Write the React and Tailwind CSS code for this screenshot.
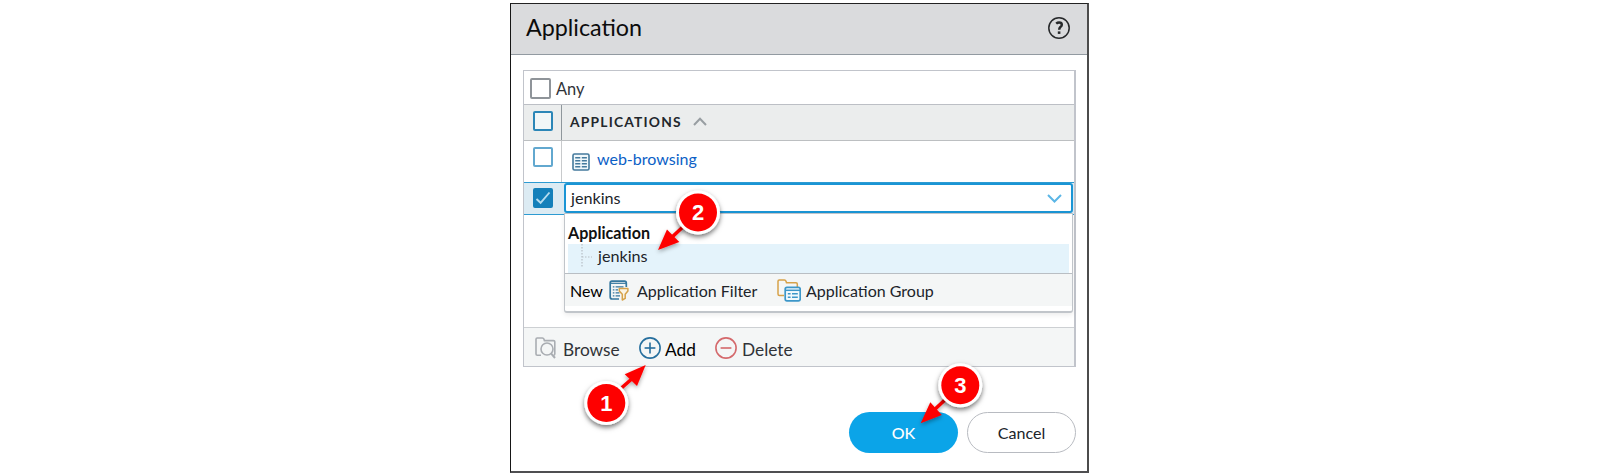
import React from "react";

function Check({ className = "", checked }) {
  return (
    <span className={"flex shrink-0 items-center justify-center rounded-[2px] border-2 " + className}>
      {checked && (
        <svg width="16" height="16" viewBox="0 0 16 16" fill="none" stroke="#b5dcef" strokeWidth="1.9">
          <path d="M1.5 9 L5.6 12.8 L14.5 2.5" />
        </svg>
      )}
    </span>
  );
}

function ListIcon() {
  return (
    <svg className="shrink-0" width="18" height="18" viewBox="0 0 18 18" fill="none">
      <rect x="1" y="1" width="16" height="16" rx="1.5" fill="#f1f8fb" stroke="#447a9d" strokeWidth="1.6" />
      <path d="M3.2 4.8H8.3M9.8 4.8H14.9M3.2 7.8H8.3M9.8 7.8H14.9M3.2 10.8H8.3M9.8 10.8H14.9M3.2 13.8H8.3M9.8 13.8H14.9" stroke="#447a9d" strokeWidth="1.4" />
    </svg>
  );
}

function FilterIcon() {
  return (
    <svg className="shrink-0" width="20" height="21" viewBox="0 0 20 21" fill="none">
      <path d="M10 19H3.2Q1.2 19 1.2 17V3Q1.2 1.2 3 1.2H15.5Q17.3 1.2 17.3 3V7" stroke="#34779f" strokeWidth="1.7" />
      <path d="M1.5 3.3H17" stroke="#34779f" strokeWidth="1.2" />
      <path d="M3.8 6.8H5.4M6.6 6.8H14.5M3.8 9.8H5.4M6.6 9.8H9M3.8 12.8H5.4M6.6 12.8H10.5M3.8 15.8H5.4M6.6 15.8H11" stroke="#34779f" strokeWidth="1.2" />
      <path d="M10.3 8.6H18.9V11L16.2 14.3V18.4L13.3 20V14.3L10.3 11Z" fill="#fbf4e4" stroke="#d6a24a" strokeWidth="1.5" strokeLinejoin="round" />
    </svg>
  );
}

function GroupIcon() {
  return (
    <svg className="shrink-0" width="24" height="23" viewBox="0 0 24 23" fill="none">
      <path d="M7 16.5H2.5Q1 16.5 1 15V2.2Q1 1 2.2 1H7.5Q8.6 1 9 2.2L9.5 3.8H19Q20.3 3.8 20.3 5V8" stroke="#d6a24a" strokeWidth="1.5" />
      <rect x="8.2" y="8.3" width="15" height="13.6" rx="1.8" fill="#f2f9fc" stroke="#3d97c9" strokeWidth="1.7" />
      <path d="M8.5 11.3H23" stroke="#3d97c9" strokeWidth="1.5" />
      <path d="M10.8 14.8H13.6M15 14.8H20.8M10.8 18.2H13.6M15 18.2H20.8" stroke="#3d97c9" strokeWidth="1.6" />
    </svg>
  );
}

function BrowseIcon() {
  return (
    <svg className="shrink-0" width="21" height="22" viewBox="0 0 21 22" fill="none" stroke="#a9adb2" strokeWidth="1.6">
      <path d="M6 18.2H2.3Q1 18.2 1 17V2.2Q1 1 2.2 1H7.4Q8.5 1 8.9 2.1L9.4 3.6H18.5Q19.8 3.6 19.8 4.8V17Q19.8 18.2 18.5 18.2" />
      <circle cx="12" cy="12" r="6" />
      <path d="M16 16.4L20 21" strokeWidth="2" />
    </svg>
  );
}

function CircleIcon({ color, plus }) {
  return (
    <svg className="shrink-0" width="22" height="22" viewBox="0 0 22 22" fill="none" stroke={color} strokeWidth="1.6">
      <circle cx="11" cy="11" r="10.1" />
      <path d="M5.6 11H16.4" />
      {plus && <path d="M11 5.6V16.4" />}
    </svg>
  );
}

function Marker({ x, y, n, arrow, shaft }) {
  return (
    <g>
      <g filter="url(#soft)">
        <path d={shaft} stroke="#fe0000" strokeWidth="3.6" />
        <path d={arrow} fill="#fe0000" />
      </g>
      <circle cx={x} cy={y} r="22" fill="#fff" filter="url(#drop)" />
      <circle cx={x} cy={y} r="19" fill="#fe0000" />
      <text x={x} y={y + 7.8} textAnchor="middle" fontSize="22" fontWeight="700" fill="#fff" fontFamily='"Liberation Sans", sans-serif'>
        {n}
      </text>
    </g>
  );
}

export default function App() {
  return (
    <div className="relative flex h-[476px] w-[1600px] bg-white pt-[3px] pl-[510px] font-['Lato',sans-serif] text-[16px] leading-5 text-[#20242a]">
      <section className="flex h-[470px] w-[579px] flex-col border-t border-r-2 border-b-2 border-l border-t-[#222] border-r-[#4c4c4c] border-b-[#4f4f51] border-l-[#161616]">
        <header className="flex h-[51px] shrink-0 items-center justify-between border-b border-[#929aa1] bg-[#dadbdd] pr-[17px] pl-[15px]">
          <h1 className="pb-[4px] text-[23.3px] leading-7 text-[#0c0c0c]">Application</h1>
          <svg className="mb-[2px]" width="22" height="22" viewBox="0 0 22 22" fill="none" stroke="#26282a">
            <circle cx="11" cy="11" r="10.2" strokeWidth="1.5" />
            <path d="M8.2 6.6Q9.4 5.5 11.1 5.5Q13.8 5.5 13.8 7.7Q13.8 9 12.4 10Q11.2 11 11.2 12.8" strokeWidth="2.5" />
            <path d="M11.1 14.4V16.9" strokeWidth="2.6" />
          </svg>
        </header>

        <div className="mt-[15px] ml-[12px] flex h-[297px] w-[553px] shrink-0 flex-col border border-r-2 border-[#c1c4cb]">
          <div className="flex h-[34px] shrink-0 items-center gap-[5px] border-b border-[#bcbfc5] pl-[6px]">
            <Check className="mt-px size-[21px] border-[#8f9499] bg-white" />
            <span className="pt-[3px] text-[16.4px] text-[#303338]">Any</span>
          </div>

          <div className="flex h-9 shrink-0 border-b border-[#bcbfc1] bg-[#ebeded]">
            <div className="flex w-[38px] items-center border-r border-[#8f979c] pb-[3px] pl-[9px]">
              <Check className="size-5 border-[#2b86b7] bg-[#f1f6f7]" />
            </div>
            <div className="flex items-center gap-[11px] pb-[2px] pl-[8px]">
              <span className="text-[13.8px] font-bold tracking-[1.2px] text-[#22272c]">APPLICATIONS</span>
              <svg width="14" height="9" viewBox="0 0 14 9" fill="none" stroke="#989ea2" strokeWidth="2">
                <path d="M1 8L7 1.8L13 8" />
              </svg>
            </div>
          </div>

          <div className="flex h-[41px] shrink-0">
            <div className="flex w-[38px] items-start border-r border-[#c8cacc] pt-[6px] pl-[9px]">
              <Check className="size-5 border-[#62a8cf] bg-white" />
            </div>
            <div className="flex items-center gap-[7px] pl-[10px]">
              <span><ListIcon /></span>
              <span className="pb-[6px] text-[#0b60c6]">web-browsing</span>
            </div>
          </div>

          <div className="flex h-[33px] shrink-0 border-y border-[#2d9bd2] bg-[#dcebf3]">
            <div className="flex w-[40px] shrink-0 items-center pb-px pl-[9px]">
              <Check checked className="size-5 border-[#1480ba] bg-[#1480ba]" />
            </div>
            <div className="relative h-[30px] w-[509px] shrink-0">
              <div className="flex h-[30px] items-center justify-between rounded-[3px] border-2 border-[#1a95d5] bg-white pr-[9px] pl-[5px]">
                <span className="text-[16.2px]">jenkins</span>
                <svg width="15" height="9" viewBox="0 0 15 9" fill="none" stroke="#5bb6e6" strokeWidth="2">
                  <path d="M1 1L7.5 7.5L14 1" />
                </svg>
              </div>
              <div className="absolute top-[30px] left-0 flex h-[100px] w-[509px] flex-col rounded-b-[3px] border-x border-t border-b-2 border-[#c1c5ca] bg-white shadow-[0_2px_5px_rgba(0,0,0,0.08)]">
                <div className="flex h-[30px] shrink-0 items-end pb-px pl-[3px] text-[16.1px] font-bold text-[#111]">Application</div>
                <div className="mx-[3px] flex h-[29px] shrink-0 items-center bg-[#e4f3fb] pb-[6px]">
                  <svg width="30" height="24" viewBox="0 0 30 24" fill="none" stroke="#b7bfc5" strokeDasharray="1.5 1.5" strokeWidth="1.2">
                    <path d="M14 0V24M14 13H24" />
                  </svg>
                  <span className="text-[16.2px]">jenkins</span>
                </div>
                <div className="flex h-[33px] shrink-0 items-center border-t border-[#b9bec3] bg-[#f4f6f6] pt-px pl-[5px]">
                  <span className="w-[39px] text-black">New</span>
                  <FilterIcon />
                  <span className="ml-[8px] w-[140px] pt-px">Application Filter</span>
                  <GroupIcon />
                  <span className="ml-[5px] pt-px">Application Group</span>
                </div>
              </div>
            </div>
          </div>

          <div className="mt-auto flex h-[39px] shrink-0 items-center border-t border-[#cdd0d3] bg-[#f4f6f6] pt-px pl-[11px] text-[17.3px] text-[#303338]">
            <BrowseIcon />
            <span className="ml-[7px] w-[76px] pt-[4px]">Browse</span>
            <CircleIcon plus color="#266f9e" />
            <span className="ml-1 w-[50px] pt-[4px] text-black">Add</span>
            <CircleIcon color="#d4696c" />
            <span className="ml-[5px] pt-[4px]">Delete</span>
          </div>
        </div>

        <footer className="mt-[45px] mr-[11px] flex justify-end gap-[9px]">
          <button className="h-[41px] w-[109px] rounded-full bg-[#0ba4e8] font-medium text-white">OK</button>
          <button className="h-[41px] w-[109px] rounded-full border border-[#b8bbc1] bg-white text-[16.1px]">Cancel</button>
        </footer>
      </section>

      <svg className="pointer-events-none absolute inset-0" width="1600" height="476" viewBox="0 0 1600 476">
        <defs>
          <filter id="drop" x="-50%" y="-50%" width="200%" height="200%">
            <feDropShadow dx="0" dy="2.5" stdDeviation="2.5" floodColor="#000" floodOpacity="0.55" />
          </filter>
          <filter id="soft" x="-50%" y="-50%" width="200%" height="200%">
            <feDropShadow dx="0" dy="2" stdDeviation="2" floodColor="#000" floodOpacity="0.35" />
          </filter>
        </defs>
        <Marker x={606.3} y={403} n="1" shaft="M618 391L634 377" arrow="M645.7 365L624.7 374.3L637 386Z" />
        <Marker x={698} y={212.5} n="2" shaft="M686 224L670 239" arrow="M658 250L667 229.5L679.3 242Z" />
        <Marker x={960.3} y={385.3} n="3" shaft="M948 397L932 412" arrow="M920.7 423.3L930.3 402.3L941.8 415Z" />
      </svg>
    </div>
  );
}
